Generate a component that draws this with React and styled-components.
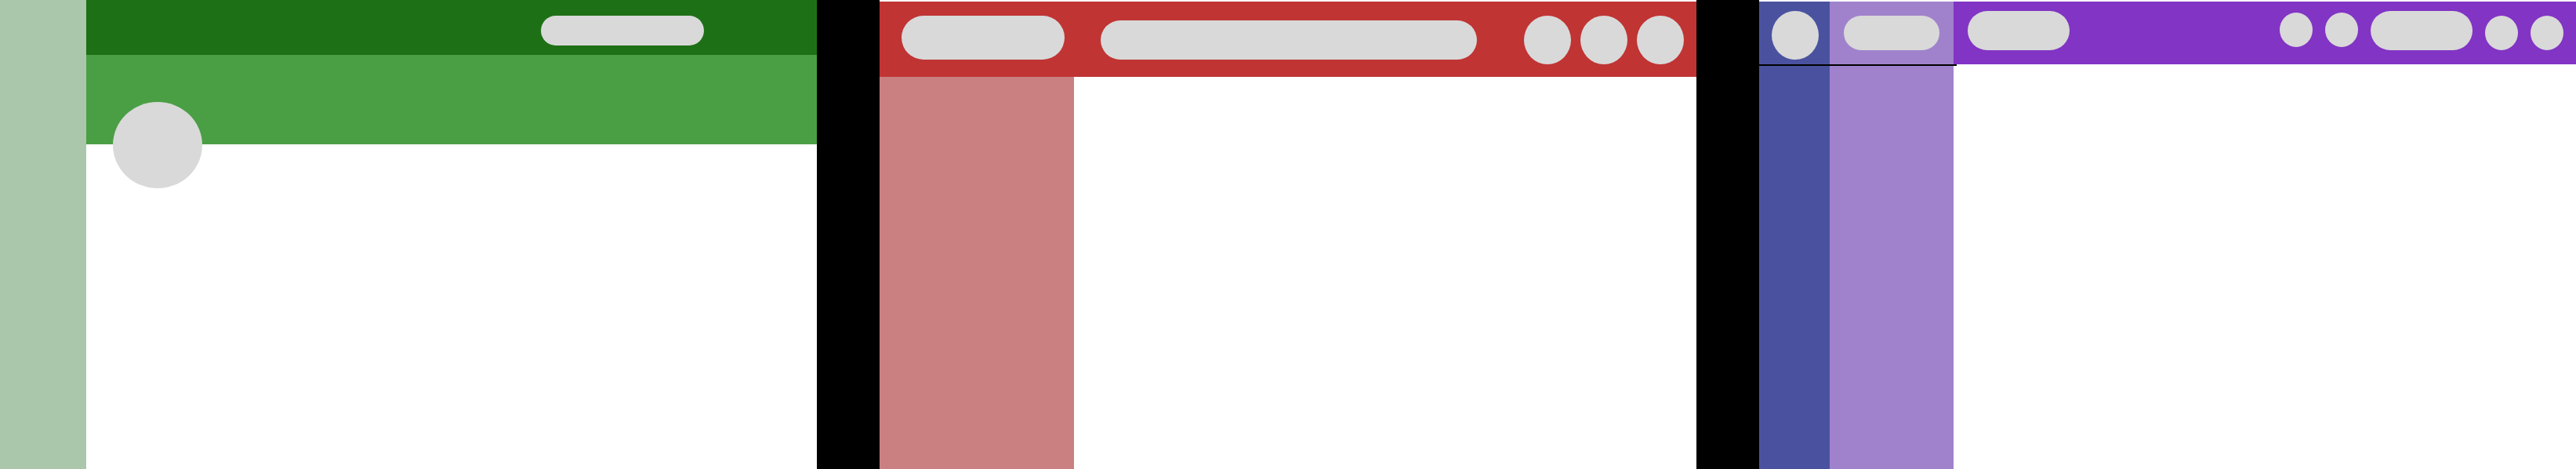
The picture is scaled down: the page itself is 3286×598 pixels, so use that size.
import styled, { createGlobalStyle } from "styled-components";

const GlobalStyle = createGlobalStyle`
  html,
  body {
    margin: 0;
    padding: 0;
    background-color: #000;
    font-family: "Liberation Sans", Arial, sans-serif;
  }
`;

const StyledScreen = styled.div`
  height: 598px;
  width: 3286px;
  display: flex;
  gap: 80px;
  background-color: #000;
  overflow: hidden;
`;

const StyledFrame = styled.div`
  width: 1042px;
  height: 100%;
  flex-shrink: 0;
  background-color: #fff;
  padding-top: ${(p) => p.$top || 0}px;
  box-sizing: border-box;
  display: flex;
  flex-direction: ${(p) => p.$dir || "row"};
`;

const Pill = styled.div`
  width: ${(p) => p.$w}px;
  height: ${(p) => p.$h}px;
  margin-top: ${(p) => p.$top || 0}px;
  flex-shrink: 0;
  border-radius: 999px;
  background-color: #d9d9d9;
`;

const Dot = styled.div`
  width: ${(p) => p.$w}px;
  height: ${(p) => p.$h}px;
  margin-top: ${(p) => p.$top || 0}px;
  flex-shrink: 0;
  border-radius: 50%;
  background-color: #d9d9d9;
`;

/* ---- green: profile page ---- */

const GreenSide = styled.aside`
  width: 110px;
  flex-shrink: 0;
  background-color: #abc7ab;
`;

const GreenMain = styled.main`
  flex: 1;
  display: flex;
  flex-direction: column;
`;

const GreenBar = styled.header`
  height: 70px;
  box-sizing: border-box;
  padding: 20px 144px 0 0;
  display: flex;
  justify-content: flex-end;
  align-items: flex-start;
  background-color: #1e7016;
`;

const Cover = styled.div`
  padding: 60px 0 0 34px;
  background-color: #4a9e44;
`;

const Avatar = styled(Dot)`
  margin-bottom: -56px;
  position: relative;
`;

/* ---- red: app with left nav ---- */

const RedBar = styled.header`
  height: 96px;
  flex-shrink: 0;
  box-sizing: border-box;
  padding: 18px 16px 0 28px;
  display: flex;
  align-items: flex-start;
  gap: 46px;
  background-color: #c03434;
`;

const IconGroup = styled.div`
  margin-left: auto;
  display: flex;
  align-items: flex-start;
  gap: ${(p) => p.$gap}px;
`;

const RedBody = styled.div`
  flex: 1;
  display: flex;
`;

const RedSide = styled.aside`
  width: 248px;
  background-color: #ca8080;
`;

/* ---- purple: rail + nav ---- */

const SideStack = styled.div`
  width: 248px;
  flex-shrink: 0;
  display: flex;
  flex-direction: column;
  position: relative;
  z-index: 1;
`;

const SideRow = styled.div`
  display: flex;
  height: ${(p) => (p.$grow ? "auto" : "80px")};
  flex: ${(p) => (p.$grow ? 1 : "none")};
`;

const Rail = styled.div`
  width: 90px;
  box-sizing: border-box;
  padding: 12px 0 0 16px;
  background-color: #4a52a0;
`;

const NavCol = styled.div`
  width: 158px;
  box-sizing: border-box;
  padding: 18px 0 0 18px;
  background-color: #a082cc;
`;

const Divider = styled.div`
  width: 252px;
  height: 2px;
  background-color: #000;
`;

const PurpleMain = styled.main`
  flex: 1;
  display: flex;
  flex-direction: column;
`;

const PurpleBar = styled.header`
  height: 80px;
  box-sizing: border-box;
  padding: 12px 16px 0 18px;
  display: flex;
  align-items: flex-start;
  background-color: #8234c4;
`;

function App() {
  return (
    <>
      <GlobalStyle />
      <StyledScreen>
        <StyledFrame>
          <GreenSide />
          <GreenMain>
            <GreenBar>
              <Pill $w={208} $h={38} />
            </GreenBar>
            <Cover>
              <Avatar $w={114} $h={110} />
            </Cover>
          </GreenMain>
        </StyledFrame>

        <StyledFrame $top={2} $dir="column">
          <RedBar>
            <Pill $w={208} $h={56} />
            <Pill $w={480} $h={50} $top={6} />
            <IconGroup $gap={12}>
              <Dot $w={60} $h={62} />
              <Dot $w={60} $h={62} />
              <Dot $w={60} $h={62} />
            </IconGroup>
          </RedBar>
          <RedBody>
            <RedSide />
          </RedBody>
        </StyledFrame>

        <StyledFrame $top={2}>
          <SideStack>
            <SideRow>
              <Rail>
                <Dot $w={60} $h={62} />
              </Rail>
              <NavCol>
                <Pill $w={122} $h={44} />
              </NavCol>
            </SideRow>
            <Divider />
            <SideRow $grow>
              <Rail />
              <NavCol />
            </SideRow>
          </SideStack>
          <PurpleMain>
            <PurpleBar>
              <Pill $w={130} $h={50} />
              <IconGroup $gap={16}>
                <Dot $w={42} $h={44} $top={2} />
                <Dot $w={42} $h={44} $top={2} />
                <Pill $w={130} $h={50} />
                <Dot $w={42} $h={44} $top={6} />
                <Dot $w={42} $h={44} $top={6} />
              </IconGroup>
            </PurpleBar>
          </PurpleMain>
        </StyledFrame>
      </StyledScreen>
    </>
  );
}

export default App;
